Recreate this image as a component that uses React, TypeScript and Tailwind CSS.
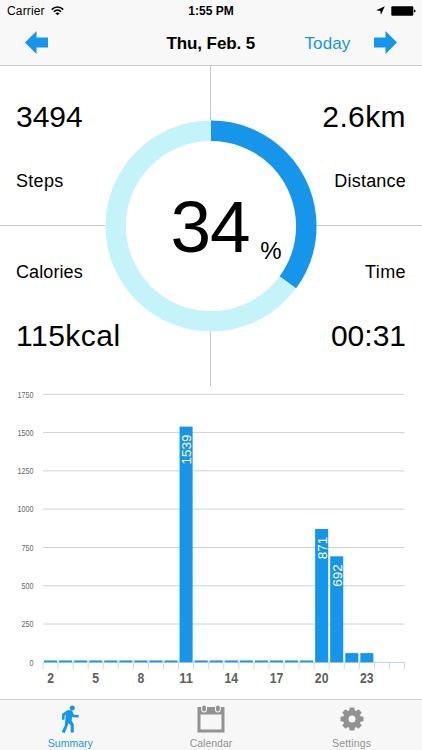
import React from 'react';

const steps = [12, 12, 12, 12, 12, 12, 12, 12, 12, 1539, 12, 12, 12, 12, 12, 12, 12, 12, 871, 692, 60, 60];
const ticks = [1750, 1500, 1250, 1000, 750, 500, 250, 0];

// Chart geometry
const LEFT = 43;
const RIGHT = 404.5;
const BASE = 276.3;
const SLOT = (RIGHT - LEFT) / 24;
const SCALE = 268 / 1750;

const StatusBar: React.FC = () => (
  <div className="grid h-5 grid-cols-3 items-center px-[6px] text-[12px] leading-none">
    <div className="flex items-center gap-[6px] pt-[2px] pl-[1px]">
      <span className="tracking-[0.15px]">Carrier</span>
      <svg width="13" height="10" viewBox="0 0 13 10" fill="none" stroke="#000" strokeWidth="1.6">
        <path d="M0.8 3.6C4 0.2 9 0.2 12.2 3.6" />
        <path d="M2.9 5.7C5 3.6 8 3.6 10.1 5.7" />
        <path d="M6.5 9.3L4.3 7.2C5.6 6.1 7.4 6.1 8.7 7.2Z" fill="#000" stroke="none" />
      </svg>
    </div>
    <div className="pt-[2px] text-center font-bold">1:55 PM</div>
    <div className="flex items-center justify-end gap-[6px] pt-[1px]">
      <svg width="9" height="9" viewBox="0 0 9 9">
        <path d="M8.8 0.3L4.9 8.8L4.3 4.9L0.2 4.3Z" />
      </svg>
      <svg width="25" height="10" viewBox="0 0 25 10">
        <rect x="0.3" y="0.3" width="22" height="9.4" rx="1.2" />
        <path d="M23 3.4Q24.6 3.6 24.6 5T23 6.6Z" />
      </svg>
    </div>
  </div>
);

const Arrow: React.FC<{ flip?: boolean }> = ({ flip }) => (
  <svg width="23" height="23" viewBox="0 0 23 23" fill="#1596ea" className={flip ? '-scale-x-100' : ''}>
    <path d="M0 11.5L11.5 0V6.5H23V16.5H11.5V23Z" />
  </svg>
);

const ProgressRing: React.FC = () => {
  const length = 2 * Math.PI * 95.3;
  return (
    <div className="absolute top-[54px] left-[105px] h-[212px] w-[212px]">
      <svg width="212" height="212" viewBox="0 0 212 212" fill="none" className="absolute inset-0">
        <circle cx="106" cy="106" r="95" fill="#fff" />
        <circle cx="106" cy="106" r="95.3" stroke="#c4f3fa" strokeWidth="20.4" />
        <circle
          cx="106"
          cy="106"
          r="95.3"
          stroke="#1596ea"
          strokeWidth="20.4"
          strokeDasharray={`${length * 0.35} ${length}`}
          transform="rotate(-90 106 106)"
        />
      </svg>
      <div className="relative flex items-baseline pt-[70px] pl-[65.5px] leading-none">
        <span className="text-[73px] tracking-[-1.2px]">34</span>
        <span className="relative top-[7px] ml-[11px] text-[24px]">%</span>
      </div>
    </div>
  );
};

const StepsChart: React.FC = () => (
  <svg width="422" height="313" viewBox="0 0 422 313" className="block">
    {ticks.map((tick) => {
      const y = BASE - tick * SCALE;
      return (
        <g key={tick}>
          <line x1={LEFT} x2={RIGHT} y1={y} y2={y} stroke={tick ? '#d2d2d2' : '#c0d0e0'} />
          <text
            x="33.5"
            y={y + 3.2}
            textAnchor="end"
            fontSize="9"
            fill="#666"
            textLength={String(tick).length * 4}
            lengthAdjust="spacingAndGlyphs"
          >
            {tick}
          </text>
        </g>
      );
    })}
    {Array.from({ length: 25 }, (_, i) => (
      <line key={i} x1={LEFT + i * SLOT} x2={LEFT + i * SLOT} y1={BASE} y2={BASE + 7} stroke="#cbd9ea" />
    ))}
    {steps.map((value, i) => {
      const height = value * SCALE;
      const x = LEFT + i * SLOT + 1;
      return (
        <g key={i}>
          <rect x={x} y={BASE - height} width={SLOT - 2} height={height} fill="#1596ea" />
          {value > 100 && (
            <text
              transform={`translate(${x + 11.4} ${BASE - height + 7.8}) rotate(-90)`}
              textAnchor="end"
              fontSize="13"
              fill="#fff"
              textLength={String(value).length * 7.5}
              lengthAdjust="spacingAndGlyphs"
            >
              {value}
            </text>
          )}
        </g>
      );
    })}
    {[2, 5, 8, 11, 14, 17, 20, 23].map((hour) => (
      <text
        key={hour}
        x={LEFT + (hour - 1.5) * SLOT}
        y="296.5"
        textAnchor="middle"
        fontSize="14"
        fontWeight="bold"
        fill="#606060"
        textLength={String(hour).length * 6.8}
        lengthAdjust="spacingAndGlyphs"
      >
        {hour}
      </text>
    ))}
  </svg>
);

const TabBar: React.FC = () => (
  <div className="grid h-[51px] grid-cols-3 border-t border-[#cfcfcf] bg-[#f7f7f7] pt-[5px] text-[10.5px] leading-none text-[#929292]">
    <div className="flex flex-col items-center gap-[5px] text-[#1596ea]">
      <svg width="18" height="28" viewBox="0 0 18 28" fill="currentColor">
        <circle cx="11.3" cy="3" r="2.5" />
        <path d="M6.4 5.2H10.8L12.9 9.8L17.6 10V12.4L11.8 12.2L11.2 11.4L10.6 15.8L12.8 19.2V27.6H9.7V20.6L7.4 18L6.4 21.6L3.8 27.9L0.6 27L3.8 20.4L4.8 9.6L3.8 10.4L3.4 14.8H0.9L1.2 8.8Z" />
      </svg>
      <span>Summary</span>
    </div>
    <div className="flex flex-col items-center gap-[5px]">
      <svg width="28" height="28" viewBox="0 0 28 28">
        <path d="M0.5 2H27.5V27.5H0.5Z" fill="#929292" />
        <path d="M3.5 9.5H24.5V24.5H3.5Z" fill="#f7f7f7" />
        <rect x="4.2" y="-1" width="5.8" height="8.5" rx="2.9" fill="#f7f7f7" />
        <rect x="18" y="-1" width="5.8" height="8.5" rx="2.9" fill="#f7f7f7" />
        <rect x="5.2" y="0.5" width="3.8" height="6" rx="1.9" fill="#929292" />
        <rect x="19" y="0.5" width="3.8" height="6" rx="1.9" fill="#929292" />
      </svg>
      <span>Calendar</span>
    </div>
    <div className="flex flex-col items-center gap-[5px]">
      <svg width="24" height="28" viewBox="-12 -14 24 28" fill="#929292">
        {[0, 45, 90, 135, 180, 225, 270, 315].map((angle) => (
          <path key={angle} d="M-3 -7L-2.3 -11.5H2.3L3 -7Z" transform={`rotate(${angle})`} />
        ))}
        <circle r="9.1" />
        <circle r="3.5" fill="#f7f7f7" />
      </svg>
      <span className="tracking-[0.15px]">Settings</span>
    </div>
  </div>
);

const App: React.FC = () => {
  return (
    <div className="flex h-[750px] w-[422px] flex-col overflow-hidden bg-white font-['Liberation_Sans',Arial,sans-serif] text-black">
      {/* Navigation */}
      <header className="h-[66px] border-b border-[#c8c8c8] bg-[#f8f8f8]">
        <StatusBar />
        <div className="flex h-[45px] items-center pr-[25px] pl-[24.5px] text-[17px] leading-none">
          <Arrow />
          <h1 className="ml-[119px] w-[92px] pt-[2px] font-bold tracking-[-0.1px] whitespace-nowrap">Thu, Feb. 5</h1>
          <span className="ml-[46px] pt-[2px] tracking-[0.1px] text-[#1596ea]">Today</span>
          <div className="ml-auto">
            <Arrow flip />
          </div>
        </div>
      </header>

      {/* Daily totals */}
      <section className="relative grid h-[320px] grid-cols-2 grid-rows-2 text-[18px] leading-none">
        <div className="flex flex-col gap-10 border-r border-b border-[#c8c8c8] pt-[36px] pl-4">
          <span className="text-[30px]">3494</span>
          <span className="tracking-[0.3px]">Steps</span>
        </div>
        <div className="flex flex-col items-end gap-10 border-b border-[#c8c8c8] pt-[36px] pr-4">
          <span className="text-[30px] tracking-[0.4px]">2.6km</span>
          <span className="tracking-[0.2px]">Distance</span>
        </div>
        <div className="flex flex-col gap-10 border-r border-[#c8c8c8] pt-[37px] pl-4">
          <span className="tracking-[0.1px]">Calories</span>
          <span className="text-[30px] tracking-[0.5px]">115kcal</span>
        </div>
        <div className="flex flex-col items-end gap-10 pt-[37px] pr-4">
          <span className="tracking-[0.4px]">Time</span>
          <span className="text-[30px]">00:31</span>
        </div>
        <ProgressRing />
      </section>

      <StepsChart />
      <TabBar />
    </div>
  );
};

export default App;
